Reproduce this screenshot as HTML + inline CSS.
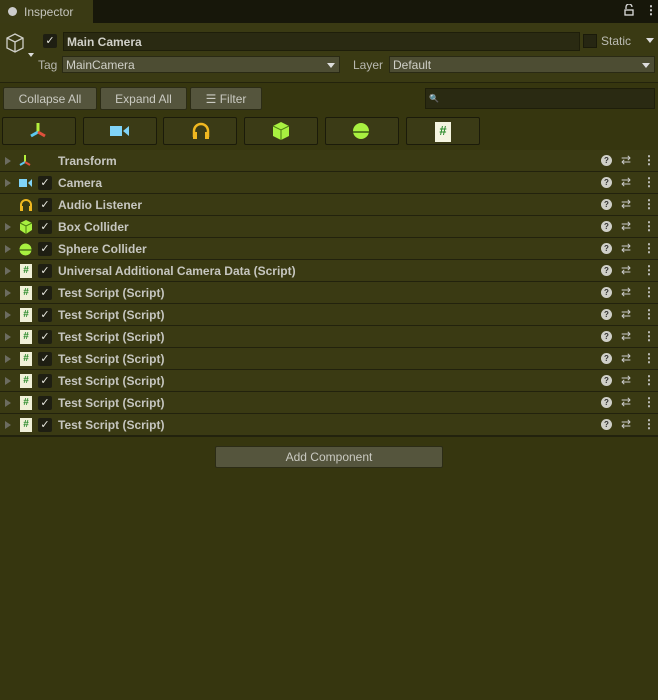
<!DOCTYPE html><html><head><style>
*{margin:0;padding:0;box-sizing:border-box}
body{width:658px;height:700px;background:#36360f;font-family:"Liberation Sans",sans-serif;font-size:12px;color:#c8c8c0;position:relative;overflow:hidden}
.a{position:absolute}
.tabbar{left:0;top:0;width:658px;height:23px;background:#17170a}
.tab{left:0;top:0;width:93px;height:23px;background:#3a3a14;color:#c4c4bc;font-size:12px;padding:5px 0 0 24px}
.hdr{left:0;top:23px;width:658px;height:60px;background:#3a3a13;border-bottom:1px solid #23230c}
.field{background:#2a2a12;border:1px solid #1e1e0a;color:#d0d0c8;padding:2px 3px;font-size:12px}
.dd{background:#4d4d33;border:1px solid #2a2a14;color:#d0d0c8;padding:1px 3px;font-size:12px}
.btn{background:#55553d;border:1px solid #2c2c16;border-radius:2px;color:#cacac2;text-align:center;font-size:12px;padding-top:4px}
.ib{background:#3b3b16;border:1px solid #1b1b0a;border-radius:2px}
.row{position:absolute;left:0;width:658px;height:22px;border-bottom:1px solid #22220d;background:#3a3a13}
.t{position:absolute;left:58px;top:4px;font-weight:bold;color:#c6c6c0;font-size:12px}
.tri{position:absolute;left:5px;top:7px;width:0;height:0;border-left:6px solid #6c6c60;border-top:4px solid transparent;border-bottom:4px solid transparent}
.cb{position:absolute;left:38px;top:4px;width:14px;height:14px;background:#1e1e12;border-radius:2px;color:#e8e8e0;font-size:11px;text-align:center;line-height:14px}
.hash{position:absolute;left:20px;top:4px;width:12px;height:14px;background:#f0f0d8;color:#2a8a2a;font-size:10px;font-weight:bold;text-align:center;line-height:14px}
.q{position:absolute;left:601px;top:5px;width:11px;height:11px;border-radius:50%;background:#cfcfc8;color:#333;font-size:8px;font-weight:bold;text-align:center;line-height:11px}
.sl{position:absolute;left:621px;top:3px;color:#ccc;font-size:12px}
.mn{position:absolute;left:643px;top:3px;color:#ccc;font-weight:bold}
</style></head><body>
<div class="a tabbar"></div>
<div class="a tab">Inspector</div>
<div class="a" style="left:8px;top:7px;width:9px;height:9px;border-radius:50%;background:#ccc"></div>
<svg class="a" style="left:624px;top:4px" width="10" height="12"><path d="M2 5V3A3 3 0 0 1 8 3" fill="none" stroke="#ddd" stroke-width="1.3"/><rect x="1" y="6" width="8" height="5" fill="none" stroke="#ddd" stroke-width="1.3"/></svg>
<div class="a" style="left:645px;top:3px;color:#ddd;font-size:12px;font-weight:bold">⋮</div>
<div class="a hdr"></div>
<svg class="a" style="left:4px;top:32px" width="32" height="30" viewBox="0 0 32 30"><path d="M11 2 L19 6 L19 16 L11 20 L3 16 L3 6 Z M3 6 L11 10 L19 6 M11 10 L11 20" fill="none" stroke="#cfcfc8" stroke-width="1.3"/><path d="M24 21 L30 21 L27 25 Z" fill="#ddd"/></svg>
<div class="a cb" style="left:43px;top:34px">✓</div>
<div class="a field" style="left:63px;top:32px;width:517px;height:19px;font-weight:bold">Main Camera</div>
<div class="a" style="left:583px;top:34px;width:14px;height:14px;background:#262612;border:1px solid #1a1a0a"></div>
<div class="a" style="left:601px;top:34px;color:#bcbcb4">Static</div>
<div class="a" style="left:646px;top:38px;border-top:5px solid #ddd;border-left:4px solid transparent;border-right:4px solid transparent"></div>
<div class="a" style="left:38px;top:58px;color:#b8b8b0">Tag</div>
<div class="a dd" style="left:62px;top:56px;width:278px;height:17px">MainCamera</div>
<div class="a" style="left:327px;top:63px;border-top:5px solid #ddd;border-left:4px solid transparent;border-right:4px solid transparent"></div>
<div class="a" style="left:353px;top:58px;color:#b8b8b0">Layer</div>
<div class="a dd" style="left:389px;top:56px;width:266px;height:17px">Default</div>
<div class="a" style="left:642px;top:63px;border-top:5px solid #ddd;border-left:4px solid transparent;border-right:4px solid transparent"></div>
<div class="a btn" style="left:3px;top:87px;width:94px;height:23px">Collapse All</div>
<div class="a btn" style="left:100px;top:87px;width:87px;height:23px">Expand All</div>
<div class="a btn" style="left:190px;top:87px;width:72px;height:23px">☰ Filter</div>
<div class="a field" style="left:425px;top:88px;width:230px;height:21px;font-size:8px;padding-top:5px">🔍</div>
<div class="a ib" style="left:2px;top:117px;width:74px;height:28px"></div>
<div class="a ib" style="left:83px;top:117px;width:74px;height:28px"></div>
<div class="a ib" style="left:163px;top:117px;width:74px;height:28px"></div>
<div class="a ib" style="left:244px;top:117px;width:74px;height:28px"></div>
<div class="a ib" style="left:325px;top:117px;width:74px;height:28px"></div>
<div class="a ib" style="left:406px;top:117px;width:74px;height:28px"></div>
<svg class="a" style="left:28px;top:121px" width="20" height="20"><path d="M10 2V11" stroke="#b4f03c" stroke-width="3"/><path d="M10 11L3 15" stroke="#5cc8f0" stroke-width="3"/><path d="M10 11L17 15" stroke="#e0503c" stroke-width="3"/></svg>
<svg class="a" style="left:110px;top:124px" width="20" height="14"><rect x="0" y="2" width="12" height="10" fill="#80d4f8"/><path d="M13 7L19 2V12Z" fill="#80d4f8"/></svg>
<svg class="a" style="left:191px;top:121px" width="20" height="20"><path d="M3 16V10A7 7 0 0 1 17 10V16" fill="none" stroke="#f0b820" stroke-width="2.5"/><rect x="2" y="11" width="4" height="7" fill="#f0b820"/><rect x="14" y="11" width="4" height="7" fill="#f0b820"/></svg>
<svg class="a" style="left:271px;top:121px" width="20" height="20"><path d="M10 1L18 5V15L10 19L2 15V5Z" fill="#a8f040"/><path d="M2 5L10 9L18 5M10 9V19" stroke="#4a7a10" fill="none"/></svg>
<svg class="a" style="left:352px;top:122px" width="18" height="18"><circle cx="9" cy="9" r="8" fill="#a8f040"/><path d="M1 10H17" stroke="#3a5a10" stroke-width="1.5"/></svg>
<div class="a" style="left:435px;top:122px;width:16px;height:20px;background:#f4f4e0;color:#2a8a2a;font-weight:bold;font-size:13px;text-align:center;line-height:18px">#</div>

<div class="row" style="top:150px"><div class="tri"></div><svg style="position:absolute;left:18px;top:4px" width="14" height="14"><path d="M7 1V8" stroke="#b4f03c" stroke-width="2"/><path d="M7 8L2 11" stroke="#5cc8f0" stroke-width="2"/><path d="M7 8L12 11" stroke="#e0503c" stroke-width="2"/></svg><div class="t">Transform</div><div class="q">?</div><div class="sl">⇄</div><div class="mn">⋮</div></div>
<div class="row" style="top:172px"><div class="tri"></div><svg style="position:absolute;left:19px;top:6px" width="14" height="10"><rect x="0" y="1" width="8" height="8" fill="#80d4f8"/><path d="M9 5L13 1V9Z" fill="#80d4f8"/></svg><div class="cb">✓</div><div class="t">Camera</div><div class="q">?</div><div class="sl">⇄</div><div class="mn">⋮</div></div>
<div class="row" style="top:194px"><svg style="position:absolute;left:19px;top:4px" width="14" height="14"><path d="M2 12V7A5 5 0 0 1 12 7V12" fill="none" stroke="#f0b820" stroke-width="2"/><rect x="1" y="8" width="3" height="5" fill="#f0b820"/><rect x="10" y="8" width="3" height="5" fill="#f0b820"/></svg><div class="cb">✓</div><div class="t">Audio Listener</div><div class="q">?</div><div class="sl">⇄</div><div class="mn">⋮</div></div>
<div class="row" style="top:216px"><div class="tri"></div><svg style="position:absolute;left:19px;top:4px" width="14" height="14"><path d="M7 0L13 3V10L7 14L1 10V3Z" fill="#a8f040"/><path d="M1 3L7 6L13 3M7 6V14" stroke="#4a7a10" fill="none"/></svg><div class="cb">✓</div><div class="t">Box Collider</div><div class="q">?</div><div class="sl">⇄</div><div class="mn">⋮</div></div>
<div class="row" style="top:238px"><div class="tri"></div><svg style="position:absolute;left:19px;top:5px" width="13" height="13"><circle cx="6.5" cy="6.5" r="6" fill="#a8f040"/><path d="M0 7H13" stroke="#3a5a10" stroke-width="1.2"/></svg><div class="cb">✓</div><div class="t">Sphere Collider</div><div class="q">?</div><div class="sl">⇄</div><div class="mn">⋮</div></div>
<div class="row" style="top:260px"><div class="tri"></div><div class="hash">#</div><div class="cb">✓</div><div class="t">Universal Additional Camera Data (Script)</div><div class="q">?</div><div class="sl">⇄</div><div class="mn">⋮</div></div>
<div class="row" style="top:282px"><div class="tri"></div><div class="hash">#</div><div class="cb">✓</div><div class="t">Test Script (Script)</div><div class="q">?</div><div class="sl">⇄</div><div class="mn">⋮</div></div>
<div class="row" style="top:304px"><div class="tri"></div><div class="hash">#</div><div class="cb">✓</div><div class="t">Test Script (Script)</div><div class="q">?</div><div class="sl">⇄</div><div class="mn">⋮</div></div>
<div class="row" style="top:326px"><div class="tri"></div><div class="hash">#</div><div class="cb">✓</div><div class="t">Test Script (Script)</div><div class="q">?</div><div class="sl">⇄</div><div class="mn">⋮</div></div>
<div class="row" style="top:348px"><div class="tri"></div><div class="hash">#</div><div class="cb">✓</div><div class="t">Test Script (Script)</div><div class="q">?</div><div class="sl">⇄</div><div class="mn">⋮</div></div>
<div class="row" style="top:370px"><div class="tri"></div><div class="hash">#</div><div class="cb">✓</div><div class="t">Test Script (Script)</div><div class="q">?</div><div class="sl">⇄</div><div class="mn">⋮</div></div>
<div class="row" style="top:392px"><div class="tri"></div><div class="hash">#</div><div class="cb">✓</div><div class="t">Test Script (Script)</div><div class="q">?</div><div class="sl">⇄</div><div class="mn">⋮</div></div>
<div class="row" style="top:414px"><div class="tri"></div><div class="hash">#</div><div class="cb">✓</div><div class="t">Test Script (Script)</div><div class="q">?</div><div class="sl">⇄</div><div class="mn">⋮</div></div>
<div class="a" style="left:0;top:436px;width:658px;height:1px;background:#22220d"></div>
<div class="a btn" style="left:215px;top:446px;width:228px;height:22px;padding-top:3px">Add Component</div>
</body></html>
